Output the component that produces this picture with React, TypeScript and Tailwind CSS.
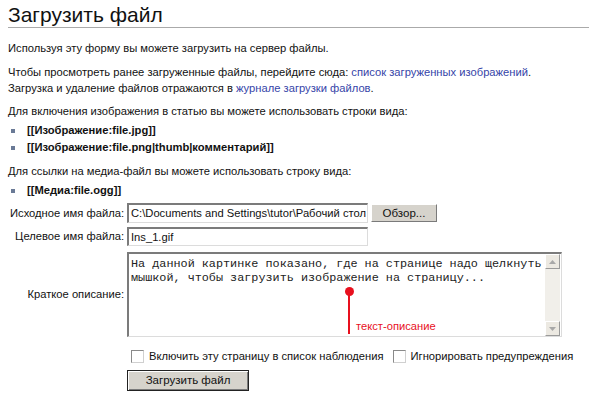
import React from "react";

const FONT = "font-['Liberation_Sans',Arial,sans-serif]";

const Bullet: React.FC<{ children: React.ReactNode }> = ({ children }) => (
  <li className="flex items-center h-[17px] font-bold">
    <span className="w-[4px] h-[4px] bg-[#6a7a96] ml-[3px] mr-[12px] shrink-0" />
    {children}
  </li>
);

// classic sunken field used by inputs and the textarea
const sunken =
  "border-t-2 border-l-2 border-b border-r border-t-[#7b7b7b] border-l-[#7b7b7b] border-b-[#dcdcdc] border-r-[#dcdcdc] bg-white";

const ArrowBox: React.FC<{ up?: boolean }> = ({ up }) => (
  <div className="w-[15px] h-[15px] bg-[#ece9e2] border border-t-white border-l-white border-b-[#9a9a9a] border-r-[#9a9a9a] flex items-center justify-center">
    <svg width="7" height="4" viewBox="0 0 7 4">
      {up ? (
        <polygon points="0,4 7,4 3.5,0" fill="#a8a8a8" />
      ) : (
        <polygon points="0,0 7,0 3.5,4" fill="#a8a8a8" />
      )}
    </svg>
  </div>
);

const Checkbox: React.FC = () => (
  <span className="inline-block w-[13px] h-[13px] bg-white border border-[#8a8a8a] border-b-[#d0d0d0] border-r-[#d0d0d0] shrink-0" />
);

const App: React.FC = () => {
  return (
    <div className={`${FONT} w-[589px] h-[402px] bg-white text-[#111] text-[11.2px] overflow-hidden relative`}>
      <h1 className="ml-[8px] pt-[2px] h-[28px] text-[21px] leading-[25px] font-normal border-b border-[#aaa]">
        Загрузить файл
      </h1>

      <div className="px-[8px]">
        <p className="mt-[12px] leading-[16px]">
          Используя эту форму вы можете загрузить на сервер файлы.
        </p>
        <p className="mt-[8px] leading-[16px]">
          Чтобы просмотреть ранее загруженные файлы, перейдите сюда:{" "}
          <span className="text-[#3645a8]">список загруженных изображений</span>.
          <br />
          Загрузка и удаление файлов отражаются в{" "}
          <span className="text-[#3645a8]">журнале загрузки файлов</span>.
        </p>
        <p className="mt-[7px] leading-[16px]">
          Для включения изображения в статью вы можете использовать строки вида:
        </p>
        <ul className="mt-[3px]">
          <Bullet>[[Изображение:file.jpg]]</Bullet>
          <Bullet>[[Изображение:file.png|thumb|комментарий]]</Bullet>
        </ul>
        <p className="mt-[7px] leading-[16px]">
          Для ссылки на медиа-файл вы можете использовать строку вида:
        </p>
        <ul className="mt-[3px]">
          <Bullet>[[Медиа:file.ogg]]</Bullet>
        </ul>
      </div>

      <div className="grid grid-cols-[124px_auto] gap-x-[3px] mt-[4px]">
        <label className="text-right self-center whitespace-nowrap">Исходное имя файла:</label>
        <div className="flex items-center gap-[3px]">
          <div className={`${sunken} w-[241px] h-[20px] pl-[2px] leading-[17px] whitespace-nowrap overflow-hidden`}>
            C:\Documents and Settings\tutor\Рабочий стол
          </div>
          <button className="w-[66px] h-[18px] bg-[#d6d3cc] border border-t-white border-l-white border-b-[#7a7a7a] border-r-[#7a7a7a] text-[11.5px] leading-[15px]">
            Обзор...
          </button>
        </div>

        <label className="text-right self-center mt-[4px] whitespace-nowrap">Целевое имя файла:</label>
        <div className={`${sunken} w-[241px] h-[19px] pl-[2px] leading-[16px] mt-[4px]`}>
          Ins_1.gif
        </div>

        <label className="text-right self-center mt-[6px] whitespace-nowrap">Краткое описание:</label>
        <div className={`${sunken} w-[435px] h-[85px] mt-[6px] flex relative`}>
          <div className="flex-1 font-['Liberation_Mono','Courier_New',monospace] text-[11.8px] leading-[14px] pl-[2px] pt-[3px] text-[#222] whitespace-nowrap overflow-hidden">
            На данной картинке показано, где на странице надо щелкнуть
            <br />
            мышкой, чтобы загрузить изображение на страницу...
          </div>
          <div className="w-[15px] mr-[1px] flex flex-col justify-between bg-[#f1efea] shrink-0">
            <ArrowBox up />
            <ArrowBox />
          </div>
          {/* callout marker pointing at the description text */}
          <div className="absolute left-[216px] top-[33px] w-[9px] h-[9px] rounded-full bg-[#e8101e]" />
          <div className="absolute left-[219px] top-[40px] w-[2px] h-[40px] bg-[#e8101e]" />
          <span className="absolute left-[227px] top-[65px] text-[#e8101e] text-[11.2px] leading-[14px]">
            текст-описание
          </span>
        </div>

        <div />
        <div className="flex items-center mt-[11px] h-[16px] whitespace-nowrap">
          <span className="ml-[4px] flex"><Checkbox /></span>
          <span className="ml-[5px]">Включить эту страницу в список наблюдения</span>
          <span className="ml-[9px] flex"><Checkbox /></span>
          <span className="ml-[5px]">Игнорировать предупреждения</span>
        </div>

        <div />
        <button className="mt-[6px] w-[122px] h-[21px] bg-[#d6d3cc] border border-[#222] shadow-[inset_1px_1px_0_#fff,inset_-1px_-1px_0_#7a7a7a] text-[11.5px] leading-[17px]">
          Загрузить файл
        </button>
      </div>
    </div>
  );
};

export default App;
